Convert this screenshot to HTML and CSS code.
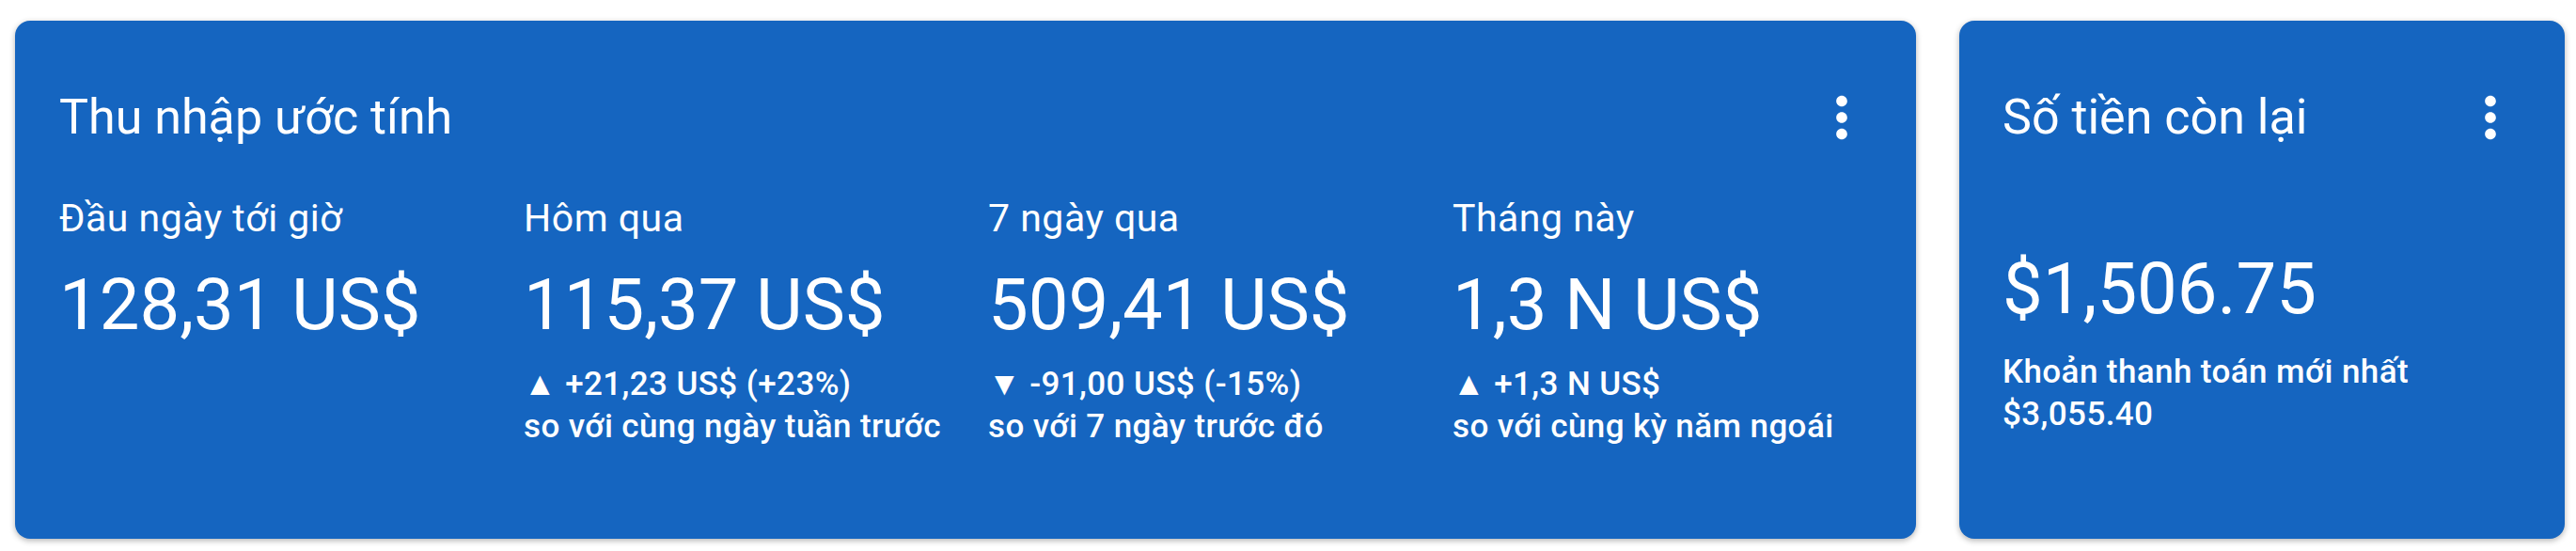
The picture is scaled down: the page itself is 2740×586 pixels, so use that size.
FILE: index.html
```html
<!DOCTYPE html>
<html>
<head>
    <title>Thu nhập ước tính</title>
    <link rel="stylesheet" href="styles.css">
</head>
<body>
    <div class="card earnings">
        <div class="card-head">
            <h2 class="card-title">Thu nhập ước tính</h2>
            <svg class="more" viewBox="0 0 24 24"><path d="M12 8c1.1 0 2-.9 2-2s-.9-2-2-2-2 .9-2 2 .9 2 2 2zm0 2c-1.1 0-2 .9-2 2s.9 2 2 2 2-.9 2-2-.9-2-2-2zm0 6c-1.1 0-2 .9-2 2s.9 2 2 2 2-.9 2-2-.9-2-2-2z"/></svg>
        </div>
        <div class="stats">
            <div class="stat">
                <div class="stat-label">Đầu ngày tới giờ</div>
                <div class="stat-value">128,31 US$</div>
            </div>
            <div class="stat">
                <div class="stat-label">Hôm qua</div>
                <div class="stat-value">115,37 US$</div>
                <div class="stat-note">
                    <div>▲ +21,23 US$ (+23%)</div>
                    <div>so với cùng ngày tuần trước</div>
                </div>
            </div>
            <div class="stat">
                <div class="stat-label">7 ngày qua</div>
                <div class="stat-value">509,41 US$</div>
                <div class="stat-note">
                    <div>▼ -91,00 US$ (-15%)</div>
                    <div>so với 7 ngày trước đó</div>
                </div>
            </div>
            <div class="stat">
                <div class="stat-label">Tháng này</div>
                <div class="stat-value">1,3 N US$</div>
                <div class="stat-note">
                    <div>▲ +1,3 N US$</div>
                    <div>so với cùng kỳ năm ngoái</div>
                </div>
            </div>
        </div>
    </div>

    <div class="card balance">
        <div class="card-head">
            <h2 class="card-title">Số tiền còn lại</h2>
            <svg class="more" viewBox="0 0 24 24"><path d="M12 8c1.1 0 2-.9 2-2s-.9-2-2-2-2 .9-2 2 .9 2 2 2zm0 2c-1.1 0-2 .9-2 2s.9 2 2 2 2-.9 2-2-.9-2-2-2zm0 6c-1.1 0-2 .9-2 2s.9 2 2 2 2-.9 2-2-.9-2-2-2z"/></svg>
        </div>
        <div class="balance-value">$1,506.75</div>
        <div class="stat-note">
            <div>Khoản thanh toán mới nhất</div>
            <div>$3,055.40</div>
        </div>
    </div>
</body>
</html>
```

FILE: styles.css
```css
body {
    margin: 0;
    padding: 22px 12px 13px 16px;
    display: flex;
    gap: 46px;
    background: #ffffff;
    color: #ffffff;
    font-family: Roboto, "Noto Sans", sans-serif;
}

.card {
    box-sizing: border-box;
    height: 551px;
    padding: 68px 44px 0 47px;
    background-color: #1565c0;
    border-radius: 16px;
    box-shadow: 0 2px 6px rgba(0, 0, 0, 0.3);
}

.earnings {
    width: 2022px;
}

.balance {
    width: 644px;
    padding-left: 46px;
}

.card-head {
    display: flex;
    align-items: center;
    justify-content: space-between;
    height: 70px;
}

.card-title {
    margin: 0;
    font-size: 52px;
    font-weight: 400;
    line-height: 70px;
}

.more {
    width: 70px;
    height: 70px;
    fill: #ffffff;
}

.stats {
    display: grid;
    grid-template-columns: repeat(4, 494px);
    margin-top: 48px;
}

.stat-label {
    font-size: 41px;
    letter-spacing: 0.5px;
    line-height: 48px;
}

.stat-value {
    margin-top: 23px;
    font-size: 76px;
    line-height: 90px;
}

.stat-note {
    margin-top: 17px;
    font-size: 35px;
    font-weight: 500;
    letter-spacing: 0.4px;
    line-height: 45px;
}

.balance-value {
    margin-top: 102px;
    font-size: 76px;
    line-height: 90px;
}

.balance .stat-note {
    margin-top: 21px;
}
```
